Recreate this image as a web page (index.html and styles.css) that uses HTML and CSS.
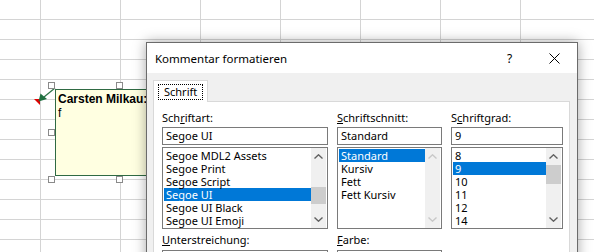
FILE: index.html
```html
<!DOCTYPE html>
<html lang="de">
<head>
    <meta charset="UTF-8">
    <meta name="viewport" content="width=device-width, initial-scale=1.0">
    <title>Kommentar formatieren</title>
    <link rel="stylesheet" href="styles.css">
</head>
<body>
    <div class="sheet">
        <!-- comment indicator + arrow -->
        <svg class="pointer" width="60" height="30" viewBox="30 80 60 30">
            <polygon points="34,99 40,99 40,105" fill="#e00000"/>
            <line x1="55" y1="88" x2="44" y2="97" stroke="#2d7446" stroke-width="1.2"/>
            <polygon points="38.5,101.5 40.5,93.5 47,99" fill="#1f7040"/>
        </svg>

        <div class="comment">
            <b>Carsten Milkau:</b><br>f
        </div>
        <span class="handle h-tl"></span>
        <span class="handle h-tm"></span>
        <span class="handle h-ml"></span>
        <span class="handle h-bl"></span>
        <span class="handle h-bm"></span>

        <div class="dialog">
            <div class="titlebar">
                <span class="title">Kommentar formatieren</span>
                <span class="help">?</span>
                <svg class="close" width="11" height="11" viewBox="0 0 11 11">
                    <path d="M0.5 0.5 L10.5 10.5 M10.5 0.5 L0.5 10.5" stroke="#000" stroke-width="1"/>
                </svg>
            </div>
            <div class="dialog-body">
                <div class="tabs">
                    <div class="tab"><span class="tab-label">Schrift</span></div>
                </div>
                <div class="panel">
                    <div class="font-grid">
                        <div class="field">
                            <div class="label">Sch<u>r</u>iftart:</div>
                            <div class="textbox">Segoe UI</div>
                            <div class="listbox">
                                <ul class="items">
                                    <li>Segoe MDL2 Assets</li>
                                    <li>Segoe Print</li>
                                    <li>Segoe Script</li>
                                    <li class="selected">Segoe UI</li>
                                    <li>Segoe UI Black</li>
                                    <li>Segoe UI Emoji</li>
                                </ul>
                                <div class="scrollbar">
                                    <div class="sb-btn"><svg width="9" height="5" viewBox="0 0 9 5"><path d="M0.5 4.5 L4.5 0.8 L8.5 4.5" fill="none" stroke="#606060" stroke-width="1.4"/></svg></div>
                                    <div class="sb-track"><div class="sb-thumb thumb-font"></div></div>
                                    <div class="sb-btn"><svg width="9" height="5" viewBox="0 0 9 5"><path d="M0.5 0.5 L4.5 4.2 L8.5 0.5" fill="none" stroke="#606060" stroke-width="1.4"/></svg></div>
                                </div>
                            </div>
                        </div>

                        <div class="field">
                            <div class="label"><u>S</u>chriftschnitt:</div>
                            <div class="textbox">Standard</div>
                            <div class="listbox">
                                <ul class="items">
                                    <li class="selected">Standard</li>
                                    <li>Kursiv</li>
                                    <li>Fett</li>
                                    <li>Fett Kursiv</li>
                                </ul>
                                <div class="scrollbar disabled">
                                    <div class="sb-btn"><svg width="9" height="5" viewBox="0 0 9 5"><path d="M0.5 4.5 L4.5 0.8 L8.5 4.5" fill="none" stroke="#c8c8c8" stroke-width="1.4"/></svg></div>
                                    <div class="sb-track"></div>
                                    <div class="sb-btn"><svg width="9" height="5" viewBox="0 0 9 5"><path d="M0.5 0.5 L4.5 4.2 L8.5 0.5" fill="none" stroke="#c8c8c8" stroke-width="1.4"/></svg></div>
                                </div>
                            </div>
                        </div>

                        <div class="field">
                            <div class="label">S<u>c</u>hriftgrad:</div>
                            <div class="textbox">9</div>
                            <div class="listbox">
                                <ul class="items">
                                    <li>8</li>
                                    <li class="selected">9</li>
                                    <li>10</li>
                                    <li>11</li>
                                    <li>12</li>
                                    <li>14</li>
                                </ul>
                                <div class="scrollbar">
                                    <div class="sb-btn"><svg width="9" height="5" viewBox="0 0 9 5"><path d="M0.5 4.5 L4.5 0.8 L8.5 4.5" fill="none" stroke="#606060" stroke-width="1.4"/></svg></div>
                                    <div class="sb-track"><div class="sb-thumb thumb-size"></div></div>
                                    <div class="sb-btn"><svg width="9" height="5" viewBox="0 0 9 5"><path d="M0.5 0.5 L4.5 4.2 L8.5 0.5" fill="none" stroke="#606060" stroke-width="1.4"/></svg></div>
                                </div>
                            </div>
                        </div>

                        <div class="field lower">
                            <div class="label"><u>U</u>nterstreichung:</div>
                            <div class="dropdown"><span class="dd-btn"></span></div>
                        </div>
                        <div class="field lower">
                            <div class="label"><u>F</u>arbe:</div>
                            <div class="dropdown"><span class="dd-btn"></span></div>
                        </div>
                    </div>
                </div>
            </div>
        </div>
    </div>
</body>
</html>
```

FILE: styles.css
```css
body {
    margin: 0;
    font-family: 'Noto Sans', sans-serif;
    font-size: 11px;
    color: #000;
    overflow: hidden;
}

.sheet {
    position: relative;
    width: 594px;
    height: 252px;
    overflow: hidden;
    background-color: #fff;
    background-image:
        linear-gradient(to right, #d4d4d4 1px, transparent 1px),
        linear-gradient(to bottom, #d4d4d4 1px, transparent 1px);
    background-size: 80px 100%, 100% 20px;
    background-position: 40px 0, 0 19px;
}

/* comment on the sheet */
.pointer {
    position: absolute;
    left: 30px;
    top: 80px;
}

.comment {
    position: absolute;
    left: 55px;
    top: 89px;
    width: 134px;
    height: 87px;
    padding: 2px 2px;
    box-sizing: border-box;
    border: 1px solid #2f6a43;
    background: #ffffe1;
    font-family: 'Liberation Sans', sans-serif;
    font-size: 12px;
    line-height: 14px;
}

.comment b {
    font-weight: bold;
}

.handle {
    position: absolute;
    width: 5px;
    height: 5px;
    border: 1px solid #8a8a8a;
    background: #fff;
}

.h-tl { left: 48px; top: 82px; }
.h-tm { left: 116px; top: 82px; }
.h-ml { left: 48px; top: 129px; }
.h-bl { left: 48px; top: 176px; }
.h-bm { left: 116px; top: 176px; }

/* dialog */
.dialog {
    position: absolute;
    left: 146px;
    top: 42px;
    width: 430px;
    height: 240px;
    border: 1px solid #6b6b6b;
    background: #f0f0f0;
    box-shadow: 0 0 12px rgba(0, 0, 0, 0.35);
}

.titlebar {
    display: flex;
    align-items: center;
    height: 30px;
    padding-left: 8px;
    background: #fff;
}

.title {
    flex: 1;
    font-size: 11.5px;
}

.help {
    width: 10px;
    margin-right: 32px;
    font-size: 12px;
}

.close {
    margin-right: 17px;
}

.dialog-body {
    padding: 7px 7px 0 6px;
}

.tabs {
    display: flex;
    height: 21px;
}

.tab {
    width: 55px;
    height: 22px;
    box-sizing: border-box;
    padding: 3px 4px 0;
    background: #fff;
    border: 1px solid #d9d9d9;
    border-bottom: none;
    position: relative;
    z-index: 1;
}

.tab-label {
    display: block;
    height: 14px;
    line-height: 14px;
    padding: 0 5px;
    border: 1px dotted #000;
}

.panel {
    height: 200px;
    background: #fff;
    border: 1px solid #d9d9d9;
    padding: 8px 0 0 8px;
}

.font-grid {
    display: grid;
    grid-template-columns: 166px 105px 112px;
    column-gap: 9px;
    row-gap: 3px;
}

.field {
    display: flex;
    flex-direction: column;
}

.label {
    line-height: 15px;
    margin-bottom: 2px;
}

.lower .label {
    margin-bottom: 3px;
}

.textbox {
    height: 18px;
    box-sizing: border-box;
    border: 1px solid #7a7a7a;
    padding: 0 3px;
    line-height: 16px;
    margin-bottom: 2px;
}

.listbox {
    display: flex;
    height: 82px;
    box-sizing: border-box;
    border: 1px solid #7a7a7a;
    padding: 0 1px;
}

.items {
    flex: 1;
    list-style: none;
    margin: 0;
    padding: 1px 0 0;
    overflow: hidden;
}

.items li {
    height: 13px;
    line-height: 13px;
    padding-left: 2px;
    white-space: nowrap;
}

.items li.selected {
    background: #0078d7;
    color: #fff;
}

.scrollbar {
    display: flex;
    flex-direction: column;
    width: 15px;
    background: #f0f0f0;
}

.sb-btn {
    height: 17px;
    display: flex;
    align-items: center;
    justify-content: center;
}

.sb-track {
    flex: 1;
}

.sb-thumb {
    height: 17px;
    background: #cdcdcd;
}

.thumb-font {
    margin-top: 22px;
}

.thumb-size {
    margin-top: 0;
    height: 19px;
}

.dropdown {
    display: flex;
    justify-content: flex-end;
    height: 20px;
    box-sizing: border-box;
    border: 1px solid #7a7a7a;
    padding: 1px;
}

.dd-btn {
    width: 15px;
    background: #e1e1e1;
}
```
